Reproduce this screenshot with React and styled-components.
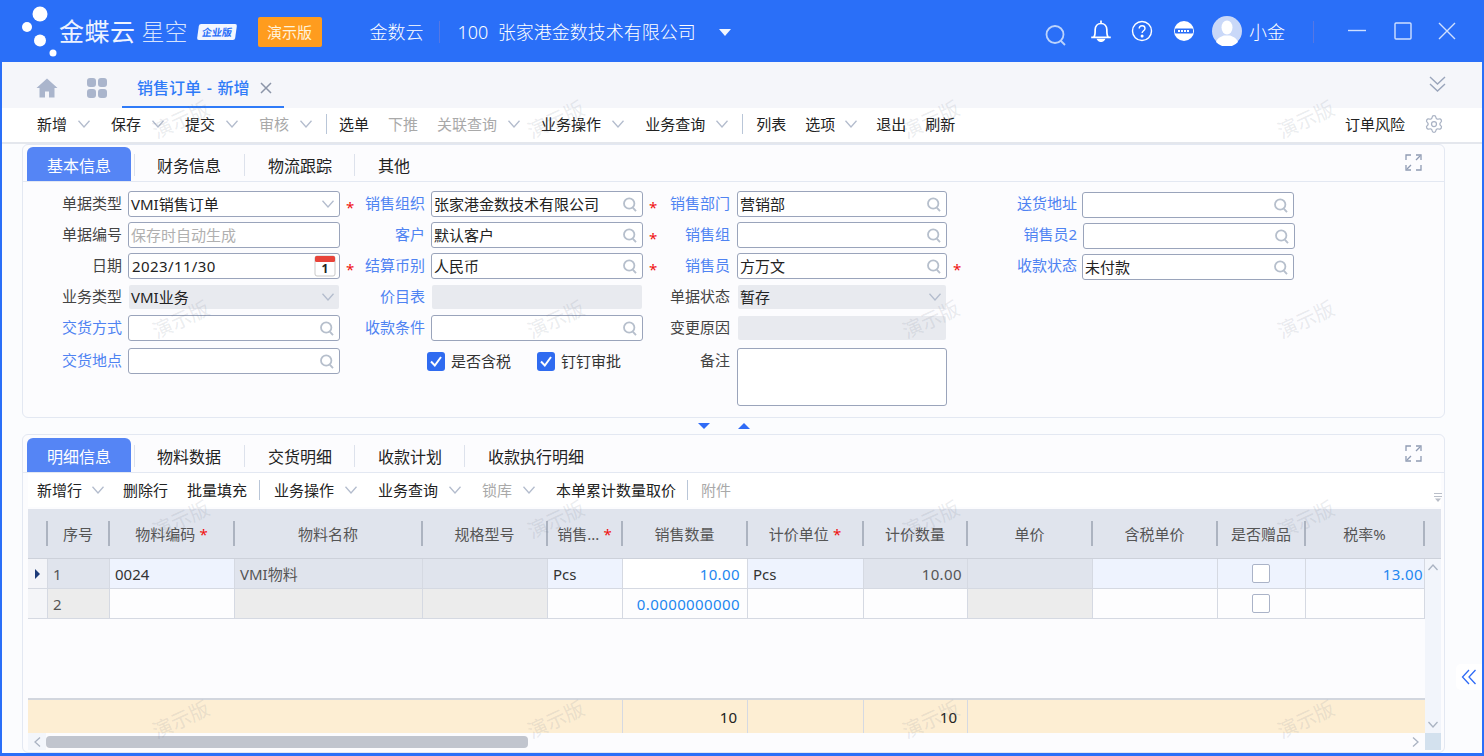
import React from 'react';
import styled, { createGlobalStyle } from 'styled-components';
import { Settings } from 'lucide-react';

const GlobalStyle = createGlobalStyle`
  html, body { margin: 0; padding: 0; }
  body {
    font-family: "Noto Sans", "Noto Sans CJK SC", sans-serif;
    font-size: 15px;
    line-height: 20px;
    color: #333;
    overflow: hidden;
  }
`;

const BLUE = '#2a6ff8';
const LINK = '#4f83f2';

const Frame = styled.div`
  position: relative;
  width: 1484px;
  height: 756px;
  box-sizing: border-box;
  display: flex;
  flex-direction: column;
  border: solid ${BLUE};
  border-width: 0 2px 3px;
  background: #fbfcfe;
  overflow: hidden;
`;

/* ---- title bar ---- */
const Header = styled.header`
  flex: 0 0 62px;
  margin: 0 -2px;
  display: flex;
  align-items: center;
  background: ${BLUE};
  color: #fff;
`;

const LogoMark = styled.svg`
  margin-left: 20px;
  width: 40px;
  height: 62px;
  flex: none;
`;

const LogoMain = styled.span`
  margin-left: -1px;
  font-size: 25px;
  line-height: 30px;
  font-weight: 400;
  letter-spacing: 0.5px;
  white-space: nowrap;
  color: #eef3ff;
`;

const LogoSub = styled.span`
  margin-left: 6px;
  font-size: 23px;
  line-height: 30px;
  font-weight: 300;
  white-space: nowrap;
  color: #d6e3fd;
`;

const Edition = styled.span`
  margin-left: 10px;
  margin-top: 2px;
  width: 38px;
  height: 16px;
  line-height: 16px;
  text-align: center;
  font-size: 10px;
  font-weight: 700;
  background: #f2f6ff;
  color: ${BLUE};
  border-radius: 2px;
  transform: skewX(-8deg);
  white-space: nowrap;
`;

const DemoBadge = styled.span`
  margin-left: 22px;
  width: 64px;
  height: 30px;
  margin-top: 2px;
  line-height: 30px;
  text-align: center;
  border-radius: 2px;
  background: #ff9c1e;
  color: #fff3dc;
  font-size: 15px;
`;

const HeaderText = styled.span`
  font-size: 18px;
  line-height: 24px;
  font-weight: 300;
  white-space: nowrap;
  margin-left: ${p => p.$left || 0}px;
  margin-top: 2px;
`;

const HeaderDivider = styled.i`
  width: 1px;
  height: 22px;
  margin: 2px ${p => p.$right ?? 18}px 0 ${p => p.$left ?? 15}px;
  background: #5577e4;
`;

const Caret = styled.i`
  margin-left: 23px;
  margin-top: 2px;
  width: 0;
  height: 0;
  border: 6px solid transparent;
  border-top: 7px solid #f2f6ff;
  border-bottom: 0;
`;

const HeaderRight = styled.div`
  margin-left: auto;
  display: flex;
  align-items: center;
  height: 100%;
`;

const HeaderIcon = styled.svg`
  width: ${p => p.$size || 22}px;
  height: ${p => p.$size || 22}px;
  margin-left: ${p => p.$left || 0}px;
  margin-top: ${p => p.$top || 0}px;
  margin-right: ${p => p.$right || 0}px;
  flex: none;
  fill: none;
  stroke: ${p => p.$stroke || '#fff'};
  stroke-width: 1.4;
`;

/* ---- page tabs ---- */
const TabBar = styled.div`
  flex: 0 0 46px;
  display: flex;
  align-items: flex-end;
  background: #f5f6fa;
  padding-left: 34px;
  padding-right: 36px;
`;

const GreyIcon = styled.svg`
  width: 22px;
  height: 22px;
  margin-bottom: 9px;
  margin-right: ${p => p.$right || 0}px;
  fill: #aab5cc;
  flex: none;
`;

const PageTab = styled.div`
  height: 44px;
  box-sizing: border-box;
  width: 162px;
  padding: 6px 0 0 15px;
  display: flex;
  align-items: center;
  gap: 11px;
  border-bottom: 2px solid #2f7bf8;
  color: #2f7bf8;
  font-size: 16px;
  font-weight: 500;
  word-spacing: 1.5px;
  white-space: nowrap;
`;

const Collapse = styled.svg`
  margin-left: auto;
  margin-bottom: 15px;
  width: 17px;
  height: 18px;
  fill: none;
  stroke: #9aa5bb;
  stroke-width: 1.4;
`;

/* ---- toolbars ---- */
const Toolbar = styled.div`
  flex: 0 0 ${p => p.$height}px;
  box-sizing: border-box;
  display: flex;
  align-items: center;
  gap: 19px;
  padding-left: ${p => p.$left}px;
  padding-bottom: ${p => p.$bottom || 0}px;
  background: #fff;
  white-space: nowrap;
  color: #222;
`;

const ToolItem = styled.span`
  display: inline-flex;
  align-items: center;
  gap: ${p => (p.$tight ? 10 : 11)}px;
  color: ${p => (p.$off ? '#a9a9a9' : '#222')};
  padding-right: ${p => (p.$menu && !p.$tight ? 2 : 0)}px;
`;

const ToolSep = styled.i`
  width: 1px;
  height: 20px;
  margin: 0 ${p => p.$r}px 0 ${p => p.$l}px;
  background: #b9c6d8;
`;

const ToolRight = styled.div`
  margin-left: auto;
  display: flex;
  align-items: center;
  gap: 19px;
  padding-right: 38px;
`;

const Chev = styled.svg`
  width: 12px;
  height: 8px;
  flex: none;
  fill: none;
  stroke: ${p => p.$color || '#b3bccd'};
  stroke-width: 1.3;
`;

const ChevDown = ({ color }) => (
  <Chev viewBox="0 0 12 8" $color={color}>
    <polyline points="0.5,0.8 6,7 11.5,0.8" />
  </Chev>
);

const Tool = ({ children, off, menu, tight }) => (
  <ToolItem $off={off} $menu={menu} $tight={tight}>
    {children}
    {menu && <ChevDown />}
  </ToolItem>
);

const ToolShadow = styled.div`
  flex: 0 0 2px;
  background: #e4e7ed;
`;

/* ---- panels ---- */
const Panel = styled.section`
  margin: 0 37px 0 20px;
  box-sizing: border-box;
  height: ${p => p.$height}px;
  border: 1px solid #e3e8f2;
  border-radius: 6px;
  background: #fcfcfe;
  display: flex;
  flex-direction: column;
`;

const PanelTabs = styled.div`
  flex: 0 0 ${p => p.$height}px;
  box-sizing: border-box;
  display: flex;
  align-items: flex-end;
  padding-left: 4px;
  padding-right: 22px;
  border-bottom: 1px solid #e3e8f2;
  font-size: 16px;
`;

const ActiveTab = styled.div`
  width: 104px;
  height: 34px;
  line-height: 39px;
  text-align: center;
  border-radius: 6px 6px 0 0;
  background: #5585f5;
  color: #fff;
  margin-right: 3px;
`;

const TabSep = styled.i`
  width: 1px;
  height: 22px;
  margin-bottom: 5px;
  background: #dde2ec;
`;

const PanelTab = styled.div`
  height: 34px;
  line-height: 39px;
  padding: ${p => (p.$first ? '0 23px 0 22px' : '0 22px 0 23px')};
  color: #222;
  white-space: nowrap;
`;

const ExpandIcon = styled.svg`
  margin-left: auto;
  margin-bottom: 10px;
  width: 17px;
  height: 17px;
  fill: none;
  stroke: #8f9bb3;
  stroke-width: 1.3;
`;

const Expand = () => (
  <ExpandIcon viewBox="0 0 17 17">
    <path d="M1 6V1h5M11 1h5v5M16 11v5h-5M6 16H1v-5" />
    <path d="M15 2l-4 4M2 15l4-4" />
  </ExpandIcon>
);

/* ---- form ---- */
const FormBody = styled.div`
  display: flex;
  flex-direction: column;
  gap: 5px;
  padding-top: 9px;
`;

const FormRow = styled.div`
  display: grid;
  height: 26px;
  grid-template-columns: 317px 303px 304px 347px;
  margin-top: ${p => p.$top || 0}px;
`;

const FieldCell = styled.div`
  display: flex;
  align-items: flex-start;
`;

const Label = styled.label`
  flex: none;
  box-sizing: border-box;
  width: ${p => p.$w}px;
  margin-right: ${p => p.$gap}px;
  height: 26px;
  padding-bottom: 2px;
  display: flex;
  align-items: center;
  justify-content: flex-end;
  white-space: nowrap;
  color: ${p => (p.$link ? LINK : '#444')};
`;

const Star = styled.span`
  margin-right: auto;
  margin-left: 6px;
  margin-top: 8px;
  color: #f01010;
  font-size: 15px;
`;

const InputBox = styled.div`
  flex: none;
  box-sizing: border-box;
  width: ${p => p.$w}px;
  height: ${p => p.$h || 26}px;
  margin-top: ${p => p.$top || 0}px;
  margin-left: ${p => p.$left || 0}px;
  display: flex;
  align-items: center;
  justify-content: space-between;
  padding: 0 5px 0 2px;
  border-radius: 3px;
  border: 1px solid ${p => (p.$off ? 'transparent' : '#9aa4bb')};
  background: ${p => (p.$off ? '#e8eaef' : '#fff')};
  background-clip: padding-box;
  color: #222;
  white-space: nowrap;
`;

const Placeholder = styled.span`
  color: #b0b0b0;
`;

const Digits = styled.span`
  letter-spacing: 0.4px;
  margin-left: 1px;
`;

const SearchSvg = styled.svg`
  width: 14px;
  height: 15px;
  flex: none;
  margin-left: auto;
  fill: none;
  stroke: #b6bfcc;
  stroke-width: 1.8;
`;

const SearchIcon = () => (
  <SearchSvg viewBox="0 0 14 15">
    <circle cx="6.2" cy="6.5" r="5.2" />
    <path d="M9.8 10.6l3.2 3.6" />
  </SearchSvg>
);

const CalendarSvg = styled.svg`
  width: 22px;
  height: 22px;
  flex: none;
  margin-right: -2px;
`;

const Calendar = () => (
  <CalendarSvg viewBox="0 0 22 22">
    <rect x="1" y="1" width="20" height="20" rx="2" fill="#fff" stroke="#c9c9c9" />
    <rect x="1" y="1" width="20" height="6" rx="1.5" fill="#e8443a" />
    <text x="11" y="18" textAnchor="middle" fontSize="12" fontWeight="700" fill="#222">1</text>
  </CalendarSvg>
);

const CheckGroup = styled.div`
  display: flex;
  align-items: center;
  height: 26px;
  margin-left: 87px;
  gap: 26px;
`;

const CheckLabel = styled.span`
  display: inline-flex;
  align-items: center;
  gap: 6px;
  color: #333;
  white-space: nowrap;
`;

const CheckBox = styled.svg`
  width: 18px;
  height: 19px;
  border-radius: 3px;
  background: #2f6bf0;
  fill: none;
  stroke: #fff;
  stroke-width: 2;
`;

const Tick = () => (
  <CheckBox viewBox="0 0 18 19">
    <polyline points="4,9.5 7.8,13.5 14,5" />
  </CheckBox>
);

const LABEL = [
  { w: 99, gap: 6, box: 212 },
  { w: 85, gap: 6, box: 212 },
  { w: 87, gap: 7, box: 210 },
  { w: 130, gap: 5, box: 212 },
];

const Field = ({ col, label, link, star, children, off, search, select, top, left, h }) => {
  const c = LABEL[col];
  return (
    <FieldCell>
      <Label $w={c.w} $gap={c.gap} $link={link}>
        {star && <Star>*</Star>}
        {label}
      </Label>
      <InputBox $w={c.box} $off={off} $top={top} $left={left} $h={h}>
        {children}
        {search && <SearchIcon />}
        {select && <ChevDown />}
      </InputBox>
    </FieldCell>
  );
};

const Splitter = styled.div`
  flex: 0 0 16px;
  display: flex;
  align-items: center;
  padding-left: 696px;
  gap: 28px;
`;

const Arrow = styled.i`
  width: 0;
  height: 0;
  border-left: 6px solid transparent;
  border-right: 6px solid transparent;
  ${p => (p.$up ? 'border-bottom: 6px solid #2f6bf6;' : 'border-top: 6px solid #2f6bf6;')}
`;

/* ---- detail grid ---- */
const COLS = '20px 62px 125px 188px 125px 75px 125px 116px 104px 125px 125px 88px 119px';

const DetailBody = styled.div`
  flex: 1;
  display: flex;
  flex-direction: column;
  padding: 0 3px 2px 5px;
  min-height: 0;
`;

const TableHead = styled.div`
  flex: 0 0 50px;
  box-sizing: border-box;
  margin-top: 2px;
  display: grid;
  grid-template-columns: ${COLS} 1fr;
  align-items: center;
  background: #e0e4ed;
  border-bottom: 1px solid #cdd1da;
  color: #555;
`;

const HeadCell = styled.div`
  height: 25px;
  line-height: 27px;
  text-align: center;
  white-space: nowrap;
  box-sizing: border-box;
  border-right: 2px solid #acb3c0;
`;

const Required = styled.span`
  color: #f01010;
  margin-left: 4px;
`;

const TableMain = styled.div`
  flex: 1;
  display: flex;
  min-height: 0;
`;

const RowsArea = styled.div`
  width: 1397px;
  display: flex;
  flex-direction: column;
`;

const DataRow = styled.div`
  flex: 0 0 30px;
  display: grid;
  grid-template-columns: ${COLS};
`;

const Cell = styled.div`
  box-sizing: border-box;
  display: flex;
  align-items: center;
  justify-content: ${p => (p.$right ? 'flex-end' : p.$center ? 'center' : 'flex-start')};
  padding: ${p => (p.$center ? 0 : p.$pad ?? '1px 7px 0 5px')};
  border-right: 1px solid #d5d9e2;
  border-bottom: 1px solid #d5d9e2;
  background: ${p => p.$bg || '#fdfdfe'};
  color: ${p => p.$color || '#333'};
  letter-spacing: ${p => (p.$right ? '0.4px' : 0)};
  white-space: nowrap;
  overflow: hidden;
`;

const RowMark = styled.i`
  width: 0;
  height: 0;
  border-top: 5px solid transparent;
  border-bottom: 5px solid transparent;
  border-left: 5px solid #1c3a78;
`;

const CellCheck = styled.i`
  width: 18px;
  height: 19px;
  margin-left: -2px;
  box-sizing: border-box;
  border: 1px solid #aab3c8;
  border-radius: 2px;
  background: #fff;
`;

const RowsSpacer = styled.div`
  flex: 1;
`;

const SumRow = styled.div`
  flex: 0 0 35px;
  box-sizing: border-box;
  display: grid;
  grid-template-columns: 595px 125px 116px 104px 1fr;
  background: #fdeed3;
  border-top: 2px solid #d2d6de;
`;

const SumCell = styled.div`
  display: flex;
  align-items: center;
  justify-content: flex-end;
  padding-right: 10px;
  color: #222;
  border-right: ${p => (p.$last ? 0 : '1px solid #d5d9e2')};
`;

const VScroll = styled.div`
  width: 16px;
  display: flex;
  flex-direction: column;
  align-items: center;
  justify-content: space-between;
  padding: 5px 0;
  box-sizing: border-box;
  background: #f2f5fb;
`;

const ScrollChev = styled.svg`
  width: 10px;
  height: 7px;
  fill: none;
  stroke: #aab3c2;
  stroke-width: 1.3;
`;

const HScroll = styled.div`
  flex: 0 0 17px;
  display: flex;
  align-items: center;
`;

const ScrollStart = styled.div`
  width: 18px;
  height: 100%;
  display: flex;
  align-items: center;
  justify-content: center;
  background: #f3f6fb;
`;

const Thumb = styled.div`
  width: 482px;
  height: 12px;
  border-radius: 4px;
  background: #c1c5ce;
`;

const ScrollEnd = styled.div`
  margin-left: auto;
  display: flex;
  align-items: center;
  height: 100%;
`;

const ScrollCorner = styled.div`
  width: 16px;
  height: 100%;
  margin-left: 6px;
  background: #d3e1ee;
`;

const SortMark = styled.svg`
  position: absolute;
  top: 492px;
  left: 1432px;
  width: 8px;
  height: 10px;
  fill: #b9bec8;
`;

const SideTab = styled.div`
  position: absolute;
  right: 0;
  top: 664px;
  width: 26px;
  height: 26px;
  display: flex;
  align-items: center;
  justify-content: center;
  background: #fff;
  border-radius: 5px 0 0 5px;
`;

const WatermarkLayer = styled.div`
  position: absolute;
  inset: 0;
  padding: 105px 0 0 129px;
  display: grid;
  grid-template-columns: repeat(4, 375px);
  grid-auto-rows: 200px;
  pointer-events: none;
  z-index: 5;
`;

const Watermark = styled.span`
  width: 100px;
  height: 30px;
  line-height: 30px;
  text-align: center;
  font-size: 20px;
  color: rgba(110, 120, 140, 0.15);
  transform: rotate(-25deg);
`;

const HEADERS = [
  ['', 0], ['序号', 0], ['物料编码', 1], ['物料名称', 0], ['规格型号', 0], ['销售...', 1], ['销售数量', 0],
  ['计价单位', 1], ['计价数量', 0], ['单价', 0], ['含税单价', 0], ['是否赠品', 0], ['税率%', 0],
];

const EDIT = '#eef3fe';
const LOCK = '#e0e4ed';
const GREY = '#ececec';
const NUM = '#1e87f0';
const DIM = '#555';

function App() {
  return (
    <Frame>
      <GlobalStyle />
      <Header>
        <LogoMark viewBox="0 0 40 62" fill="#fff">
          <circle cx="20" cy="14" r="7.5" />
          <circle cx="7" cy="27" r="5" />
          <circle cx="20" cy="40.5" r="6" />
          <circle cx="33" cy="53" r="3.5" />
        </LogoMark>
        <LogoMain>金蝶云</LogoMain>
        <LogoSub>星空</LogoSub>
        <Edition>企业版</Edition>
        <DemoBadge>演示版</DemoBadge>
        <HeaderText $left={48}>金数云</HeaderText>
        <HeaderDivider />
        <HeaderText>100&nbsp;&nbsp;张家港金数技术有限公司</HeaderText>
        <Caret />
        <HeaderRight>
          <HeaderIcon viewBox="0 0 22 22" $stroke="#bcd3fc" $top={7}>
            <circle cx="10" cy="10.5" r="8.5" strokeWidth="1.8" />
            <path d="M16 17l4 4" strokeWidth="1.8" />
          </HeaderIcon>
          <HeaderIcon viewBox="2 1.5 18 19" preserveAspectRatio="none" $left={23}>
            <path d="M3 16.5h16M5 16.5c1.4-1.6 1.2-4 1.2-6.5 0-3.2 2-5.5 4.8-5.5s4.8 2.3 4.8 5.5c0 2.5-.2 4.9 1.2 6.5M11 2v2.5" />
            <path d="M8.5 18.5c1 1.8 4 1.8 5 0z" fill="#fff" />
          </HeaderIcon>
          <HeaderIcon viewBox="0 0 22 22" $left={19}>
            <circle cx="11" cy="11" r="9.5" />
            <path d="M8.2 8.5c0-1.700 1.300-2.800 2.900-2.800s2.900 1.100 2.900 2.700c0 2.400-2.900 2.400-2.900 4.700" />
            <circle cx="11.1" cy="16" r="0.8" fill="#fff" />
          </HeaderIcon>
          <HeaderIcon viewBox="0 0 22 22" $left={20} style={{ stroke: 'none' }}>
            <circle cx="11" cy="11" r="10" fill="#fff" />
            <rect x="2" y="8.5" width="18" height="5" rx="1" fill={BLUE} />
            <path d="M5 11h12" stroke="#fff" strokeWidth="2" strokeDasharray="2 1" />
          </HeaderIcon>
          <HeaderIcon viewBox="0 0 30 30" $size={30} $left={17} style={{ stroke: 'none' }}>
            <circle cx="15" cy="15" r="15" fill="#c9d8f8" />
            <ellipse cx="15" cy="11.5" rx="5.5" ry="7" fill="#fff" />
            <path d="M4 26c2-5 6-5.500 8-6.500h6c2 1 6 1.500 8 6.500a15 15 0 0 1-22 0z" fill="#fff" />
          </HeaderIcon>
          <HeaderText $left={7}>小金</HeaderText>
          <HeaderDivider $left={28} $right={0} />
          <HeaderIcon viewBox="0 0 18 18" $size={18} $left={34} $stroke="#cfe0ff">
            <path d="M0 8.5h18" />
          </HeaderIcon>
          <HeaderIcon viewBox="0 0 18 18" $size={18} $left={28} $stroke="#cfe0ff">
            <rect x="1" y="1" width="16" height="16" rx="1" />
          </HeaderIcon>
          <HeaderIcon viewBox="0 0 18 18" $size={18} $left={26} $right={28} $stroke="#cfe0ff">
            <path d="M1 1l16 16M17 1L1 17" />
          </HeaderIcon>
        </HeaderRight>
      </Header>

      <TabBar>
        <GreyIcon viewBox="0 0 22 22" $right={28}>
          <path d="M11 1.5L0.5 11h3v9.500h5.500v-6h4v6h5.500V11h3z" />
        </GreyIcon>
        <GreyIcon viewBox="0 0 22 22" $right={14}>
          <rect x="1" y="1" width="9" height="9" rx="3" />
          <rect x="12" y="1" width="9" height="9" rx="3" />
          <rect x="1" y="12" width="9" height="9" rx="3" />
          <rect x="12" y="12" width="9" height="9" rx="3" />
        </GreyIcon>
        <PageTab>
          销售订单 - 新增
          <svg width="12" height="12" viewBox="0 0 12 12" stroke="#8c95a8" strokeWidth="1.5">
            <path d="M1 1l10 10M11 1L1 11" />
          </svg>
        </PageTab>
        <Collapse viewBox="0 0 17 18">
          <path d="M1 2l7.500 7 7.500-7M1 9l7.500 7 7.500-7" />
        </Collapse>
      </TabBar>

      <Toolbar $height={34} $left={35} $bottom={2}>
        <Tool menu>新增</Tool>
        <Tool menu>保存</Tool>
        <Tool menu>提交</Tool>
        <Tool menu off>审核</Tool>
        <ToolSep $l={-7} $r={-7} />
        <Tool>选单</Tool>
        <Tool off>下推</Tool>
        <Tool menu off>关联查询</Tool>
        <Tool menu>业务操作</Tool>
        <Tool menu>业务查询</Tool>
        <ToolSep $l={-7} $r={-6} />
        <Tool>列表</Tool>
        <Tool menu tight>选项</Tool>
        <Tool>退出</Tool>
        <Tool>刷新</Tool>
        <ToolRight>
          <Tool>订单风险</Tool>
          <Settings size={20} color="#aab3c4" strokeWidth={1.5} />
        </ToolRight>
      </Toolbar>
      <ToolShadow />

      <Panel $height={274}>
        <PanelTabs $height={37}>
          <ActiveTab>基本信息</ActiveTab>
          <TabSep />
          <PanelTab $first>财务信息</PanelTab>
          <TabSep />
          <PanelTab>物流跟踪</PanelTab>
          <TabSep />
          <PanelTab>其他</PanelTab>
          <Expand />
        </PanelTabs>
        <FormBody>
          <FormRow>
            <Field col={0} label="单据类型" select>VMI销售订单</Field>
            <Field col={1} label="销售组织" link star search>张家港金数技术有限公司</Field>
            <Field col={2} label="销售部门" link star search>营销部</Field>
            <Field col={3} label="送货地址" link search top={1} />
          </FormRow>
          <FormRow>
            <Field col={0} label="单据编号"><Placeholder>保存时自动生成</Placeholder></Field>
            <Field col={1} label="客户" link search>默认客户</Field>
            <Field col={2} label="销售组" link star search />
            <Field col={3} label="销售员2" link search top={1} left={1} />
          </FormRow>
          <FormRow>
            <Field col={0} label="日期"><Digits>2023/11/30</Digits><Calendar /></Field>
            <Field col={1} label="结算币别" link star search>人民币</Field>
            <Field col={2} label="销售员" link star search>方万文</Field>
            <Field col={3} label="收款状态" link star search top={1}>未付款</Field>
          </FormRow>
          <FormRow>
            <Field col={0} label="业务类型" off select>VMI业务</Field>
            <Field col={1} label="价目表" link off />
            <Field col={2} label="单据状态" off select>暂存</Field>
          </FormRow>
          <FormRow>
            <Field col={0} label="交货方式" link search />
            <Field col={1} label="收款条件" link search />
            <Field col={2} label="变更原因" off />
          </FormRow>
          <FormRow $top={2}>
            <Field col={0} label="交货地点" link search />
            <CheckGroup>
              <CheckLabel><Tick />是否含税</CheckLabel>
              <CheckLabel><Tick />钉钉审批</CheckLabel>
            </CheckGroup>
            <Field col={2} label="备注" h={58} />
          </FormRow>
        </FormBody>
      </Panel>

      <Splitter>
        <Arrow />
        <Arrow $up />
      </Splitter>

      <Panel $height={319}>
        <PanelTabs $height={38}>
          <ActiveTab>明细信息</ActiveTab>
          <TabSep />
          <PanelTab $first>物料数据</PanelTab>
          <TabSep />
          <PanelTab>交货明细</PanelTab>
          <TabSep />
          <PanelTab>收款计划</PanelTab>
          <TabSep />
          <PanelTab>收款执行明细</PanelTab>
          <Expand />
        </PanelTabs>
        <DetailBody>
          <Toolbar $height={34} $left={9}>
            <Tool menu tight>新增行</Tool>
            <Tool>删除行</Tool>
            <Tool>批量填充</Tool>
            <ToolSep $l={-7} $r={-5} />
            <Tool menu>业务操作</Tool>
            <Tool menu>业务查询</Tool>
            <Tool menu off>锁库</Tool>
            <Tool>本单累计数量取价</Tool>
            <ToolSep $l={-8} $r={-6} />
            <Tool off>附件</Tool>
          </Toolbar>
          <TableHead>
            {HEADERS.map(([text, required], i) => (
              <HeadCell key={i}>
                {text}
                {required ? <Required>*</Required> : null}
              </HeadCell>
            ))}
          </TableHead>
          <TableMain>
            <RowsArea>
              <DataRow>
                <Cell $center $bg="#f3f4f8"><RowMark /></Cell>
                <Cell $bg={LOCK} $color={DIM}>1</Cell>
                <Cell $bg={EDIT}>0024</Cell>
                <Cell $bg={LOCK} $color={DIM}>VMI物料</Cell>
                <Cell $bg={LOCK} />
                <Cell $bg={EDIT}>Pcs</Cell>
                <Cell $bg="#fff" $right $color={NUM}>10.00</Cell>
                <Cell $bg={EDIT}>Pcs</Cell>
                <Cell $bg={LOCK} $right $color={DIM} $pad="1px 5px 0 0">10.00</Cell>
                <Cell $bg={LOCK} />
                <Cell $bg={EDIT} />
                <Cell $bg={EDIT} $center><CellCheck /></Cell>
                <Cell $bg={EDIT} $right $color={NUM} $pad="1px 1px 0 0">13.00</Cell>
              </DataRow>
              <DataRow>
                <Cell $bg="#f4f5f8" />
                <Cell $bg={GREY} $color={DIM}>2</Cell>
                <Cell />
                <Cell $bg={GREY} />
                <Cell $bg={GREY} />
                <Cell />
                <Cell $right $color={NUM}>0.0000000000</Cell>
                <Cell />
                <Cell />
                <Cell $bg={GREY} />
                <Cell />
                <Cell $center><CellCheck /></Cell>
                <Cell />
              </DataRow>
              <RowsSpacer />
              <SumRow>
                <SumCell />
                <SumCell>10</SumCell>
                <SumCell />
                <SumCell>10</SumCell>
                <SumCell $last />
              </SumRow>
            </RowsArea>
            <VScroll>
              <ScrollChev viewBox="0 0 10 7"><polyline points="0.5,6 5,1 9.5,6" /></ScrollChev>
              <ScrollChev viewBox="0 0 10 7"><polyline points="0.5,1 5,6 9.5,1" /></ScrollChev>
            </VScroll>
          </TableMain>
          <HScroll>
            <ScrollStart>
              <svg width="7" height="10" viewBox="0 0 7 10" fill="none" stroke="#aab3c2" strokeWidth="1.3">
                <polyline points="6,0.5 1,5 6,9.5" />
              </svg>
            </ScrollStart>
            <Thumb />
            <ScrollEnd>
              <svg width="7" height="10" viewBox="0 0 7 10" fill="none" stroke="#aab3c2" strokeWidth="1.3">
                <polyline points="1,0.5 6,5 1,9.5" />
              </svg>
              <ScrollCorner />
            </ScrollEnd>
          </HScroll>
        </DetailBody>
      </Panel>

      <SortMark viewBox="0 0 8 10">
        <path d="M0 1h8v1H0zM0 4h8v1H0zM1 6.5h6L4 10z" />
      </SortMark>
      <SideTab>
        <svg width="16" height="16" viewBox="0 0 16 16" fill="none" stroke="#2f6bf6" strokeWidth="1.3">
          <path d="M8 1L1.5 8 8 15M14.5 1L8 8l6.5 7" />
        </svg>
      </SideTab>

      <WatermarkLayer>
        {Array.from({ length: 16 }, (_, i) => (
          <Watermark key={i}>演示版</Watermark>
        ))}
      </WatermarkLayer>
    </Frame>
  );
}

export default App;
